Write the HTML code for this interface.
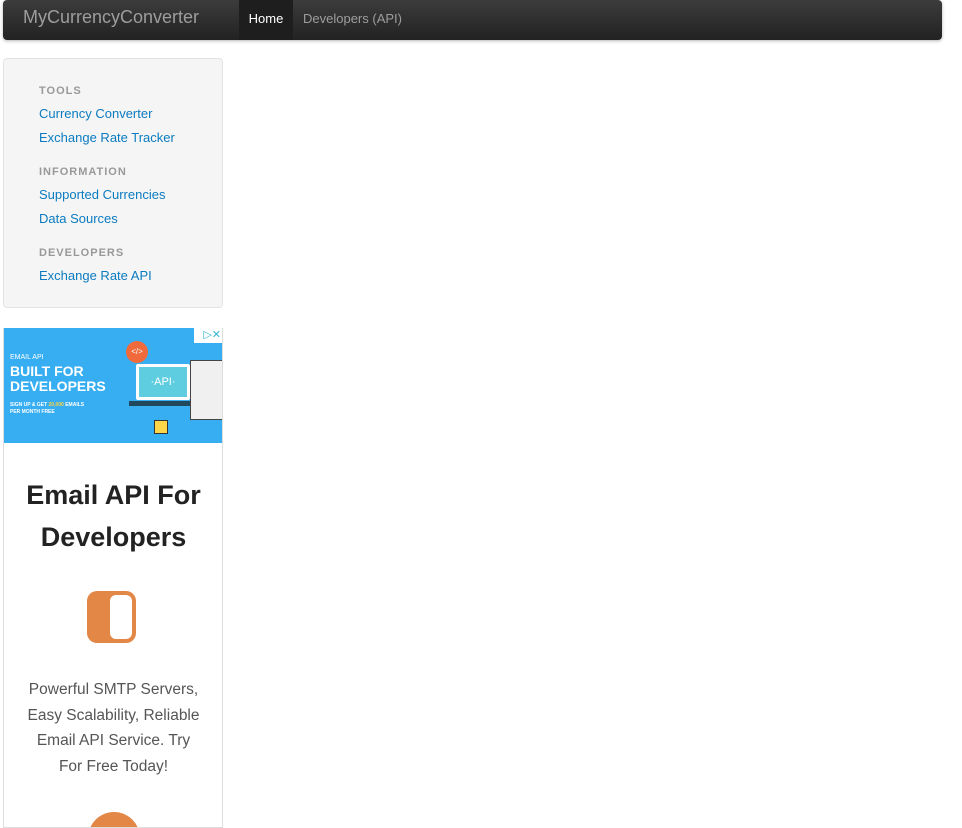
<!DOCTYPE html>
<html><head><meta charset="utf-8"><style>
*{margin:0;padding:0;box-sizing:border-box}
body{width:962px;height:824px;overflow:hidden;background:#fff;font-family:"Liberation Sans",Arial,sans-serif;position:relative}
.nav{position:absolute;left:3px;top:0;width:939px;height:40px;border-radius:4px;background:linear-gradient(#3c3c3c,#222);box-shadow:0 1px 3px rgba(0,0,0,.3)}
.brand{position:absolute;left:20px;top:7px;font-size:18px;color:#9d9d9d}
.home{position:absolute;left:236px;top:0;width:54px;height:40px;background:#1e1e1e;color:#fff;font-size:13px;line-height:38px;text-align:center}
.dev{position:absolute;left:300px;top:0;line-height:38px;font-size:13px;color:#9d9d9d}
.side{position:absolute;left:3px;top:58px;width:220px;height:250px;background:#f5f5f5;border:1px solid #e3e3e3;border-radius:4px}
.h{position:absolute;left:35px;font-size:11px;font-weight:bold;letter-spacing:1px;color:#999}
.l{position:absolute;left:35px;font-size:13px;color:#0a7bc1}
.ad{position:absolute;left:3px;top:328px;width:220px;height:500px;border:1px solid #ddd;border-top:none;overflow:hidden}
.ban{position:absolute;left:0;top:0;width:219px;height:115px;background:#38aef2;color:#fff}
.t1{position:absolute;left:0;top:470px;width:219px}
h2{position:absolute;left:0;top:146px;width:219px;text-align:center;font-size:27px;line-height:42px;color:#222;font-weight:bold}
.p{position:absolute;left:0;top:349px;width:219px;text-align:center;font-size:15.5px;line-height:25.5px;color:#555}
</style></head><body>
<div class="nav"><div class="brand">MyCurrencyConverter</div><div class="home">Home</div><div class="dev">Developers (API)</div></div>
<div class="side">
<div class="h" style="top:26px">TOOLS</div>
<div class="l" style="top:47px">Currency Converter</div>
<div class="l" style="top:71px">Exchange Rate Tracker</div>
<div class="h" style="top:107px">INFORMATION</div>
<div class="l" style="top:128px">Supported Currencies</div>
<div class="l" style="top:152px">Data Sources</div>
<div class="h" style="top:188px">DEVELOPERS</div>
<div class="l" style="top:209px">Exchange Rate API</div>
</div>
<div class="ad">
<div class="ban">
<div style="position:absolute;left:6px;top:26px;font-size:7px">EMAIL API</div>
<div style="position:absolute;left:6px;top:36px;font-size:14px;font-weight:bold;line-height:15px">BUILT FOR<br>DEVELOPERS</div>
<div style="position:absolute;left:6px;top:74px;font-size:5px;font-weight:bold;line-height:7px">SIGN UP &amp; GET <span style="color:#ffd23f">20,000</span> EMAILS<br>PER MONTH FREE</div>
<div style="position:absolute;left:132px;top:36px;width:54px;height:36px;background:#5fcde0;border:3px solid #fff;border-radius:2px;font-size:11px;text-align:center;line-height:30px">·API·</div>
<div style="position:absolute;left:125px;top:73px;width:68px;height:5px;background:#22485e"></div>
<div style="position:absolute;left:122px;top:13px;width:22px;height:22px;border-radius:50%;background:#f06a3b;font-size:8px;text-align:center;line-height:22px">&lt;/&gt;</div>
<div style="position:absolute;left:186px;top:32px;width:33px;height:60px;background:#f0f0f0;border:1px solid #444"></div>
<div style="position:absolute;left:150px;top:92px;width:14px;height:14px;background:#ffd54a;border:1px solid #333"></div>
<div style="position:absolute;left:190px;top:0;width:29px;height:15px;background:#fff;color:#35b4d6;font-size:11px;text-align:right;padding-right:2px">▷✕</div>
</div>
<h2>Email API For<br>Developers</h2>
<div style="position:absolute;left:83px;top:263px;width:49px;height:52px;background:#e38747;border-radius:10px"><div style="position:absolute;left:23px;top:4px;width:22px;height:44px;background:#fff;border-radius:6px"></div></div>
<div class="p">Powerful SMTP Servers,<br>Easy Scalability, Reliable<br>Email API Service. Try<br>For Free Today!</div>
<div style="position:absolute;left:84px;top:484px;width:52px;height:52px;border-radius:50%;background:#e38747"></div>
</div>
</body></html>
